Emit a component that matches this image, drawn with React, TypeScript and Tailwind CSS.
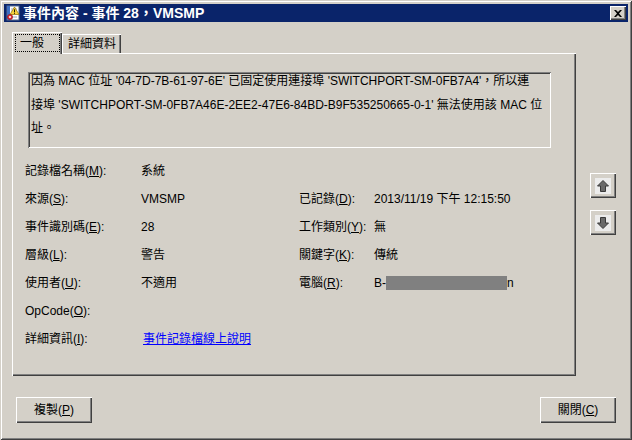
import React from "react";

const FONT = '"Liberation Sans", "Noto Sans CJK TC", sans-serif';

const raised =
  "shadow-[inset_1px_1px_0_#ffffff,inset_-1px_-1px_0_#404040,inset_-2px_-2px_0_#808080]";

function U({ c }: { c: string }) {
  return <span className="underline">{c}</span>;
}

function TitleIcon() {
  return (
    <svg width="16" height="16" viewBox="0 0 16 16">
      <rect x="2" y="1" width="12" height="14" fill="#ffffff" stroke="#5a6f8f" />
      <rect x="2" y="1" width="3" height="14" fill="#3d6fc2" />
      <line x1="6" y1="4" x2="12" y2="4" stroke="#9aa8bf" />
      <line x1="6" y1="6" x2="12" y2="6" stroke="#9aa8bf" />
      <line x1="6" y1="12" x2="12" y2="12" stroke="#9aa8bf" />
      <path d="M9.5 2 L14 9.5 L5 9.5 Z" fill="#f6d23c" stroke="#9a7a10" strokeWidth="0.8" />
      <rect x="9.1" y="4.3" width="0.9" height="3" fill="#000" />
      <rect x="9.1" y="7.9" width="0.9" height="0.9" fill="#000" />
      <circle cx="5" cy="12" r="2.6" fill="#e0303a" stroke="#8a1018" strokeWidth="0.6" />
      <circle cx="5" cy="12" r="1" fill="#ffffff" />
    </svg>
  );
}

function ArrowIcon({ down }: { down?: boolean }) {
  return (
    <svg width="16" height="16" viewBox="0 0 16 16">
      <rect x="0" y="0" width="16" height="16" fill="#ececec" />
      <g transform={down ? "rotate(180 8 8)" : undefined}>
        <path
          d="M8 2.5 L13.5 8 L10.5 8 L10.5 13.5 L5.5 13.5 L5.5 8 L2.5 8 Z"
          fill="#6a6a6a"
          stroke="#3a3a3a"
          strokeWidth="1"
          strokeLinejoin="miter"
        />
      </g>
    </svg>
  );
}

function Row({
  l1,
  v1,
  l2,
  v2,
}: {
  l1: React.ReactNode;
  v1?: React.ReactNode;
  l2?: React.ReactNode;
  v2?: React.ReactNode;
}) {
  return (
    <div className="grid grid-cols-[116px_158px_75px_1fr] h-[28px] items-center whitespace-nowrap">
      <div>{l1}</div>
      <div>{v1}</div>
      <div>{l2}</div>
      <div>{v2}</div>
    </div>
  );
}

export default function App() {
  return (
    <div
      className="w-[632px] h-[440px] bg-[#d4d0c8] p-[4px] flex flex-col text-[12px] text-black shadow-[inset_1px_1px_0_#d4d0c8,inset_-1px_-1px_0_#404040,inset_2px_2px_0_#ffffff,inset_-2px_-2px_0_#808080]"
      style={{ fontFamily: FONT }}
    >
      {/* title bar */}
      <div className="h-[18px] bg-[#0a246a] flex items-center pl-[1px] pr-[2px]">
        <TitleIcon />
        <span className="ml-[2px] text-white font-bold text-[14px] leading-[18px]">
          事件內容 - 事件 28，VMSMP
        </span>
        <div
          className={`ml-auto w-[16px] h-[14px] bg-[#d4d0c8] flex items-center justify-center ${raised}`}
        >
          <svg width="8" height="7" viewBox="0 0 8 7">
            <path d="M0 0 L2 0 L4 2 L6 0 L8 0 L5 3.5 L8 7 L6 7 L4 5 L2 7 L0 7 L3 3.5 Z" fill="#000" />
          </svg>
        </div>
      </div>

      {/* body */}
      <div className="flex-1 flex flex-col pl-2 pr-3 pt-[10px]">
        <div className="flex">
          <div className="w-[564px] flex flex-col">
            {/* tabs */}
            <div className="h-[21px] flex items-end">
              <div className="relative z-10 w-[50px] h-[22px] -mb-px bg-[#d4d0c8] shadow-[inset_1px_1px_0_#ffffff,inset_-1px_0_0_#404040,inset_-2px_0_0_#808080] pl-[8px] pt-[4px] leading-[14px]">
                一般
                <div className="absolute left-[3px] right-[2px] top-[2px] bottom-[2px] border border-dotted border-black" />
              </div>
              <div className="w-[59px] h-[19px] bg-[#d4d0c8] shadow-[inset_1px_1px_0_#ffffff,inset_-1px_0_0_#404040,inset_-2px_0_0_#808080] pl-[6px] pt-[3px] leading-[14px]">
                詳細資料
              </div>
            </div>
            {/* panel */}
            <div className="h-[323px] bg-[#d4d0c8] pt-[19px] pl-[13px] shadow-[inset_1px_1px_0_#ffffff,inset_-1px_-1px_0_#404040,inset_-2px_-2px_0_#808080]">
              <div className="ml-[3px] w-[523px] h-[76px] pl-[3px] pt-[3px] flex flex-col gap-[11.5px] shadow-[inset_1px_1px_0_#808080,inset_-1px_-1px_0_#ffffff,inset_2px_2px_0_#404040,inset_-2px_-2px_0_#d4d0c8] whitespace-nowrap">
                <div className="h-[12px] leading-[12px]">
                  因為 MAC 位址 '04-7D-7B-61-97-6E' 已固定使用連接埠 'SWITCHPORT-SM-0FB7A4'，所以連
                </div>
                <div className="h-[12px] leading-[12px]">
                  接埠 'SWITCHPORT-SM-0FB7A46E-2EE2-47E6-84BD-B9F535250665-0-1' 無法使用該 MAC 位
                </div>
                <div className="h-[12px] leading-[12px]">址。</div>
              </div>

              <div className="mt-[9px] flex flex-col">
                <Row l1={<>記錄檔名稱(<U c="M" />):</>} v1="系統" />
                <Row
                  l1={<>來源(<U c="S" />):</>}
                  v1="VMSMP"
                  l2={<>已記錄(<U c="D" />):</>}
                  v2="2013/11/19 下午 12:15:50"
                />
                <Row
                  l1={<>事件識別碼(<U c="E" />):</>}
                  v1="28"
                  l2={<>工作類別(<U c="Y" />):</>}
                  v2="無"
                />
                <Row
                  l1={<>層級(<U c="L" />):</>}
                  v1="警告"
                  l2={<>關鍵字(<U c="K" />):</>}
                  v2="傳統"
                />
                <Row
                  l1={<>使用者(<U c="U" />):</>}
                  v1="不適用"
                  l2={<>電腦(<U c="R" />):</>}
                  v2={
                    <span className="flex items-center">
                      B-
                      <span className="inline-block w-[121px] h-[14px] bg-[#808080]" />
                      n
                    </span>
                  }
                />
                <Row l1={<>OpCode(<U c="O" />):</>} />
                <Row
                  l1={<>詳細資訊(<U c="I" />):</>}
                  v1={
                    <span className="text-[#0000ff] underline ml-[2px]">事件記錄檔線上說明</span>
                  }
                />
              </div>
            </div>
          </div>

          {/* arrows */}
          <div className="ml-[14px] mt-[141px] flex flex-col gap-[12px]">
            <div className={`w-[26px] h-[25px] bg-[#d4d0c8] flex items-center justify-center ${raised}`}>
              <ArrowIcon />
            </div>
            <div className={`w-[26px] h-[25px] bg-[#d4d0c8] flex items-center justify-center ${raised}`}>
              <ArrowIcon down />
            </div>
          </div>
        </div>

        {/* bottom buttons */}
        <div className="mt-[21px] pl-1 flex justify-between">
          <div className={`w-[76px] h-[26px] bg-[#d4d0c8] flex items-center justify-center ${raised}`}>
            複製(<U c="P" />)
          </div>
          <div className={`w-[76px] h-[26px] bg-[#d4d0c8] flex items-center justify-center ${raised}`}>
            關閉(<U c="C" />)
          </div>
        </div>
      </div>
    </div>
  );
}
